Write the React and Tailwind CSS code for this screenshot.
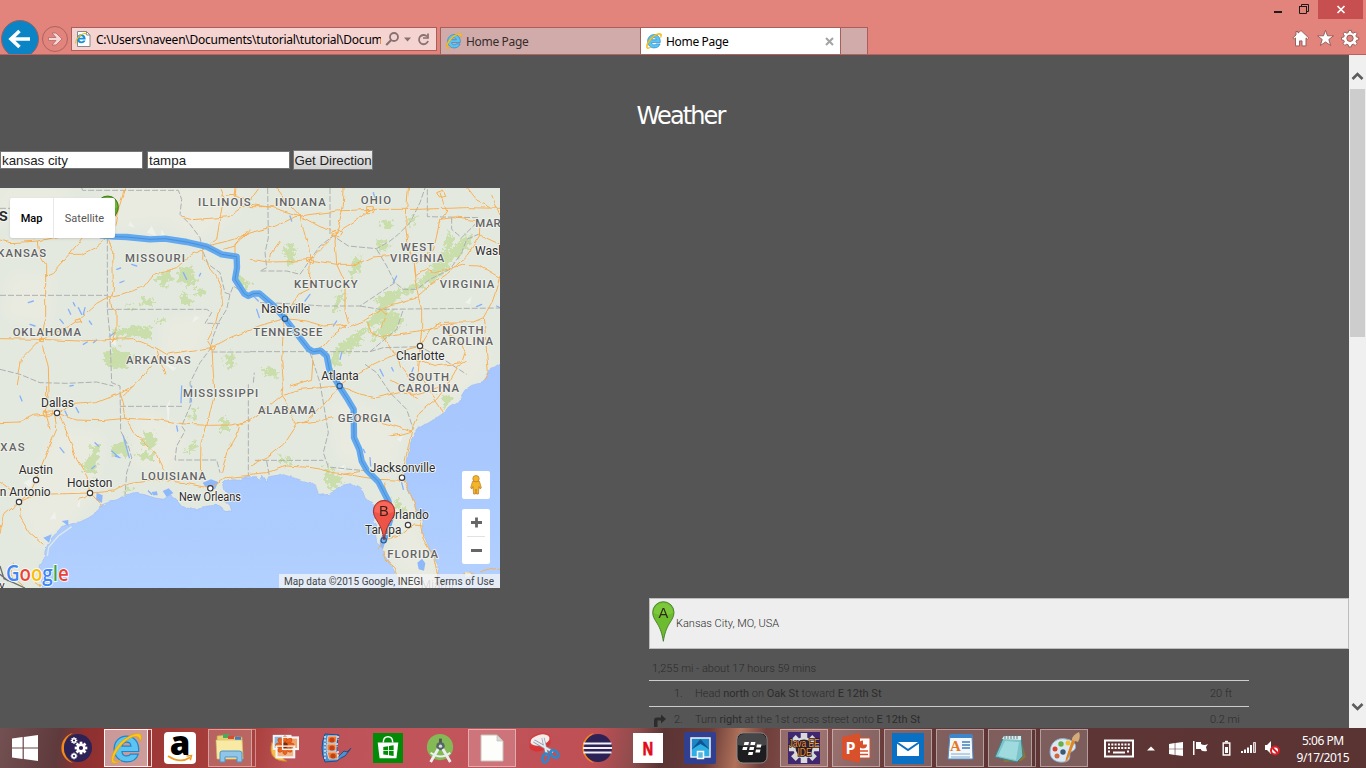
import React from "react";

/* ---------- shared icons ---------- */

function IELogo({ size = 16 }) {
  return (
    <svg width={size} height={size} viewBox="2 1 29 30" className="shrink-0">
      <path d="M16.500 4C9.600 4 4.500 9.500 4.500 16.500S9.800 29 16.700 29c5.600 0 9.700-2.900 11.200-7.600h-7.400c-.8 1.200-2 1.800-3.800 1.800-2.700 0-4.400-1.600-4.600-4.300H28.300C29 10 24 4 16.500 4zm-4.300 9.600c.6-2.400 2-3.700 4.400-3.700s3.900 1.300 4.200 3.700z" fill="#5cc3f2" stroke="#1f86c8" strokeWidth="1.200" />
      <path d="M3.500 30C-.5 27.500 4 16 12 9 19.500 2.500 28.500-.5 30.500 3c1 1.800.2 4.500-1.500 7 .3-2.300.2-4-1-5C24.500 2.500 16.500 7 11 13.500 5.500 20 2.800 27 4.800 28.300c1.300.9 3.700 0 6.200-1.500C8 29.800 5 31 3.500 30z" fill="#fbc91c" stroke="#e0a30c" strokeWidth=".7" />
    </svg>
  );
}

function WindowsLogo({ size = 26 }) {
  return (
    <svg width={size} height={size} viewBox="0 0 26 26" fill="#fff">
      <path d="M0 3.600 10.600 2v10.400H0zM11.800 1.900 26 0v12.400H11.800zM0 13.600h10.600V24L0 22.500zM11.800 13.600H26V26l-14.200-2z" />
    </svg>
  );
}

/* ---------- browser chrome ---------- */

function WindowButtons() {
  return (
    <div className="flex h-[19px] items-start">
      <svg width="60" height="19" viewBox="0 0 60 19" fill="none" stroke="#1e1a1a">
        <path d="M10 12h8" strokeWidth="2" />
        <path d="M35.500 6.500h7v7h-7z" strokeWidth="1" />
        <path d="M35 6.500h8M37.500 6V4.500h7v7H43" strokeWidth="1" />
      </svg>
      <svg width="45" height="19" viewBox="0 0 45 19" className="ml-[-6px] bg-[#c84f50]">
        <path d="m19.500 6 7 7m0-7-7 7" stroke="#fff" strokeWidth="1.700" />
      </svg>
    </div>
  );
}

function AddressBar() {
  return (
    <div className="mt-[27px] flex h-[24px] w-[366px] items-center border border-[#a65f5b] bg-[#f5d3d1] pl-[3px]">
      <svg width="16" height="18" viewBox="0 0 16 18" className="shrink-0">
        <path d="M2.500 1.500h9l3.500 3.500v11.500h-12.500z" fill="#fff" stroke="#888" />
        <path d="M11.500 1.500v3.500H15" fill="none" stroke="#888" />
        <g transform="translate(0 2.500) scale(.38)">
          <path d="M16.500 4.500C9.600 4.500 5 9.700 5 16.500s4.800 12 11.700 12c5.400 0 9.300-2.700 10.900-7.300h-6.500c-.9 1.500-2.400 2.200-4.300 2.200-3 0-4.900-1.800-5.100-4.900H28c.6-8.300-4-14-11.500-14zm-4.700 9.300c.6-2.700 2.300-4.200 4.800-4.200s4.200 1.500 4.600 4.200z" fill="#1b91d6" />
          <path d="M3 29C-1 24 8 11 16 6c6-4 13-5 14-1" fill="none" stroke="#f0bd1b" strokeWidth="3" />
        </g>
      </svg>
      <div className="ml-[5px] w-[285px] overflow-hidden whitespace-nowrap pt-[2px] font-['Noto_Sans',sans-serif] text-[12px] leading-[20px] tracking-[-0.24px] text-black">
        C:\Users\naveen\Documents\tutorial\tutorial\Documents
      </div>
      <svg width="50" height="20" viewBox="0 0 50 20" className="ml-[4px] shrink-0" fill="none" stroke="#867271">
        <circle cx="9" cy="8" r="4" strokeWidth="1.800" />
        <path d="m6.200 11-5 5" strokeWidth="2.200" />
        <path d="M19 8.500h7l-3.500 4z" fill="#867271" stroke="none" />
        <path d="M42 7.500A4.600 4.600 0 1 0 43 12" strokeWidth="1.800" />
        <path d="M43 4.500v4.500h-5" strokeWidth="1.700" />
      </svg>
    </div>
  );
}

function Tab({ active }) {
  return (
    <div className={"flex h-[27px] items-center border-r border-t border-[#a65f5b] pl-[5px] font-['Noto_Sans',sans-serif] text-[12px] tracking-[-0.33px] " + (active ? "w-[200px] bg-white text-black" : "w-[201px] border-l bg-[#d1abaa] text-[#352b2b]")}>
      <IELogo size={16} />
      <span className="ml-[4px] flex-1 pt-[2px]">Home Page</span>
      {active && (
        <svg width="9" height="9" viewBox="0 0 9 9" className="mr-[6px]" stroke="#a3a3a3" strokeWidth="2">
          <path d="m1 1 7 7m0-7-7 7" />
        </svg>
      )}
    </div>
  );
}

function BrowserHeader() {
  return (
    <header className="flex h-[55px] w-full items-start border-b border-[#b9615b] bg-[#e2837c]">
      <svg width="71" height="54" viewBox="0 0 71 54" className="shrink-0">
        <circle cx="20" cy="39" r="18.500" fill="#0b84c6" stroke="#96605f" />
        <path d="M30 39H12m7.500-8L11 39l8.500 8" fill="none" stroke="#fff" strokeWidth="3.600" />
        <circle cx="55" cy="39" r="12.500" fill="none" stroke="#ab6461" />
        <path d="M48.500 37.500h7.500l-4-4.500h4l6 6-6 6h-4l4-4.500h-7.500z" fill="#f6d6d4" stroke="#b16a67" strokeWidth=".8" />
      </svg>
      <AddressBar />
      <div className="ml-[3px] mt-[27px] flex">
        <Tab />
        <Tab active />
        <div className="h-[27px] w-[27px] border-r border-t border-[#a65f5b] bg-[#d1abaa]" />
      </div>
      <div className="ml-auto flex flex-col items-end">
        <div className="pr-[3px]"><WindowButtons /></div>
        <svg width="74" height="34" viewBox="1292 19 74 34" className="mt-0" fill="#fff" stroke="#8f5754" strokeWidth=".9">
          <path d="m1301 30.500 7.800 7.500-1.200 1.200-1.600-1.300v8h-4v-5h-2.500v5h-4v-8l-1.500 1.300-1.200-1.200 3.200-3v-3.500h2v1.600z" />
          <path d="m1325.500 30.300 2 5.500h6l-4.700 3.700 1.900 6-5.200-3.500-5.200 3.500 1.900-6-4.700-3.700h6z" />
          <g transform="translate(1350 38)">
            <path d="M-1.300-7.600h2.600l.5 2.200 1.500.6L5.300-6l1.800 1.800-1.200 2 .6 1.300 2.200.4v2.300l-2.200.5-.6 1.400 1.200 1.900-1.800 1.800-2-1.200-1.500.6-.5 2.100h-2.600l-.5-2.100-1.400-.6-2 1.200-1.700-1.800 1.200-1.900-.6-1.400-2.200-.5V-.5l2.200-.4.600-1.400-1.200-1.900 1.700-1.800 2 1.200 1.400-.6z" />
            <circle r="3.200" cy=".3" fill="#e2837c" />
          </g>
        </svg>
      </div>
    </header>
  );
}

/* ---------- map ---------- */

const WATER =
  "M125 1210 125 1180 120 1140 133 1120 135 1095 146 1070 160 1050 180 1032 190 1020 215 1010 240 1008 265 996 290 980 300 960 325 950 350 940 372 930 400 920 440 928 465 936 490 940 512 926 528 938 545 958 562 966 585 972 605 966 620 958 645 955 660 960 678 976 695 974 690 958 675 945 688 935 700 936 690 922 672 912 668 895 680 883 700 878 720 880 735 872 770 872 780 882 788 868 800 885 806 872 830 868 850 866 870 872 890 878 910 884 932 890 947 900 950 915 960 928 985 925 1005 915 1025 898 1052 893 1075 905 1088 916 1095 935 1110 950 1127 960 1130 990 1120 1005 1133 1020 1127 1050 1130 1070 1145 1085 1150 1105 1165 1125 1180 1150 1195 1180 1205 1210 1320 1210 1312 1175 1317 1150 1305 1120 1290 1090 1265 1035 1270 1005 1253 985 1240 945 1222 905 1215 880 1218 840 1226 800 1232 770 1240 750 1260 724 1290 706 1315 695 1335 680 1345 666 1370 650 1384 630 1395 612 1415 598 1445 590 1458 570 1465 555 1485 545 1500 535 1520 520 1520 1210Z";

const ROADS = [
  "0 162 30 170 70 168 115 165 160 155 215 140 323 155",
  "115 165 120 205 137 235 137 400 123 460 64 520 52 600",
  "323 155 285 185 245 205 210 205",
  "250 155 210 205 160 260 135 270",
  "323 155 338 190 340 310 335 330 375 322 430 303 460 265 530 245 575 205 610 190",
  "335 330 290 355 240 400 190 430 120 460",
  "0 458 120 460 240 465 340 460 400 458 470 487 500 505 560 495 635 485 690 455 750 430",
  "330 330 335 365 348 375 348 440 337 468",
  "120 460 145 540 147 620 136 680",
  "335 470 345 455 M470 487 485 540 498 565 M455 540 425 575 370 630",
  "610 190 608 220 650 270 667 310 665 350 650 410 620 465 636 490 640 560 645 620 620 720 603 770 601 865",
  "610 190 650 160 662 85 672 35 660 6 M620 182 700 160 750 140 830 120 900 85",
  "545 93 575 101 630 97 690 92 740 55 775 6",
  "375 6 360 55 350 90 345 120 335 155",
  "705 6 702 30 720 50 750 62 830 62 M663 30 700 25 740 40",
  "670 190 705 180 750 130 M705 215 705 175 740 135",
  "750 55 820 65 900 90 1010 75 1110 70 1250 70 1400 65 1500 67",
  "830 6 860 45 900 90 960 122 1010 140 1080 95 1110 70",
  "900 88 910 130 925 180 931 222 927 310 895 325 870 370 855 398",
  "1032 6 1030 60 1010 140 1005 165 1010 235 1035 290 1035 375 1045 410",
  "1010 140 970 180 930 220 865 227 805 228 750 220 M810 225 815 200 840 165",
  "930 222 1010 235 1070 235 1115 213 1180 208",
  "1320 20 1330 50 1340 75 1317 110 1310 150 1300 190 1240 235 1245 280 1255 330",
  "1217 120 1225 180 1239 225 1245 270 M1217 120 1220 70 1225 6",
  "1320 100 1360 95 1435 105 M1440 110 1438 150 1400 210 1340 265 1290 298 1250 333 1180 355 1140 375 1090 405 1040 425 1025 412",
  "1245 265 1280 250 1300 258 1340 250 1385 238 1440 240 1500 275",
  "1500 270 1485 320 1475 350 1450 395 1455 430 1460 500 1465 560 1450 585",
  "1400 6 1430 45 1470 65 M1475 30 1500 90 M1435 145 1500 175",
  "1255 330 1265 370 1265 430 1260 480 1270 490",
  "1260 480 1290 430 1320 410 1360 408 1420 408 1450 395",
  "1310 410 1345 440 1385 475 1395 500 1385 530 1310 540 1250 520",
  "1100 405 1110 440 1140 452 1220 440 1290 430 1360 410",
  "1140 365 1160 385 1145 425 M1145 450 1175 490 1205 545 1240 590",
  "1260 480 1210 495 1160 515 1110 540 1060 570 1019 600",
  "1260 490 1255 560 1280 600 1320 660 1330 680",
  "750 430 790 415 855 398 920 405 970 420 1040 415 1000 445 970 480 940 498 935 580 870 600",
  "855 398 850 430 845 520 850 595 845 630 890 715 850 775 800 815 750 840",
  "890 715 920 705 950 680 1019 600 M890 712 960 705 1000 695",
  "1019 600 1080 625 1130 635 1195 620 1245 625 1330 600",
  "1019 600 960 605 900 610 850 625 800 665 750 703",
  "1065 690 1110 700 1170 715 1235 735 M1170 580 1205 600 1225 620 1250 635",
  "1235 735 1260 680 1310 640 1340 600 1375 540 1400 525",
  "1235 735 1225 780 1210 850 1206 875 1235 930 1260 1010 1270 1060 1300 1110 1315 1180",
  "0 710 60 708 100 688 170 681 230 702 300 704 380 697 480 702 560 715 625 718 690 717 750 705",
  "171 681 220 655 290 650 340 630 365 620 400 600",
  "360 620 370 650 378 700 400 740 450 785 470 805 495 855",
  "165 690 170 730 140 800 108 882 90 920 57 948 15 985 0 1040",
  "180 690 205 750 230 820 260 870 270 921 310 960",
  "57 948 60 990 90 1040 130 1075 M57 948 110 925 200 923 270 921 340 915 385 890 460 880 550 890 631 907 680 875 750 868",
  "0 888 57 930 M270 921 255 935 235 940",
  "720 715 710 750 680 800 665 860 M750 703 710 720",
  "750 865 800 860 860 840 940 845 1000 860 1070 870 1130 880 1206 883",
  "1150 890 1170 950 1165 990 1155 1030 1150 1063 1130 1090 M1155 1060 1200 1050 1240 1017 1270 1020",
  "1145 1085 1155 1120 1185 1145 1200 1185 1210 1206 M1095 855 1060 860 1030 865 M140 600 140 690 150 730",
  "1165 750 1200 745 1235 735 M40 1130 35 1170 70 1200 M105 1190 120 1200",
];

const BORDERS = [
  "0 328 322 328 M322 155 322 370 620 370 635 380 615 412 660 412",
  "0 67 30 67 M245 6 248 13 535 13 545 40 540 85 570 115 600 155 610 200 625 235 660 260 675 320 690 325 700 300 745 330",
  "322 370 330 450 335 590 360 600 362 735 385 780 395 815 380 860 375 930",
  "690 325 680 370 655 410 640 450 630 490 600 530 570 590 575 650 545 720 555 735 530 780 525 822 650 822 660 860",
  "635 498 750 498 M745 595 745 870 M360 661 548 661",
  "0 550 60 565 120 590 200 592 290 588 340 600",
  "803 6 805 155 795 200 800 245 780 255 860 255 900 265 930 222 960 180 1000 150 1045 180 1130 188 1170 165 1195 145 1230 110 1260 50 1275 6",
  "990 6 990 150 M1282 10 1282 92 1435 95 M1355 95 1355 130 1385 155 1425 115",
  "1130 190 1160 240 1185 290 1210 310 1250 310 1290 280 1350 250 1385 200 1400 160 1435 145",
  "780 350 850 352 970 360 1080 360 1185 290 M1080 360 1140 370 1500 366",
  "750 497 1110 497 1150 485 1260 482 1330 520 1400 565 M1110 497 1190 430 1210 370",
  "760 590 763 560 M930 500 960 590 985 740 970 800 985 843 1050 850 1160 860 1210 855",
  "765 823 970 823 M800 825 808 870 M1095 535 1130 560 1170 620 1220 670 1240 730",
];

const FORESTS = [
  "475 265 510 260 515 285 490 300 470 285", "540 245 580 240 575 270 600 275 570 300 535 290", "540 325 575 330 580 355 545 355", "590 305 615 310 610 335 585 330",
  "378 358 405 360 400 375 375 372", "425 335 460 345 455 360 425 358", "470 395 495 400 490 415 475 412",
  "340 430 400 420 455 425 450 460 400 450 340 455", "345 485 390 495 405 525 370 550 320 540 310 500",
  "700 265 750 290 745 310 715 300", "675 505 705 500 700 545 672 540",
  "270 780 300 785 295 820 275 815", "430 735 470 745 465 785 425 780", "415 805 465 800 465 825 420 820", "555 790 590 765 590 790 555 805",
  "330 790 380 755 385 810 340 810", "245 845 265 810 290 815 290 870 255 860", "660 700 690 705 690 735 660 738",
  "575 665 590 670 585 710 575 700", "370 905 400 905 395 915 375 915",
  "1145 115 1160 100 1180 110 1175 128 1150 128", "1225 95 1250 88 1250 115 1220 118", "860 170 885 180 878 250 855 205", "1130 170 1165 168 1165 190 1130 192",
  "1335 170 1345 130 1360 160 1350 200 1395 150 1425 140 1415 175 1350 235 1300 290 1210 325 1160 375 1200 380 1210 410 1170 450 1115 460 1150 405 1100 430 1070 480 1020 510 1010 540 985 530 1000 495 1040 460 1100 420 1140 350 1180 320 1250 290 1290 250 1320 220",
  "1120 345 1160 320 1200 325 1150 350", "1055 220 1085 210 1080 250 1045 290 1050 260", "1020 315 1040 320 1010 375 995 375", "785 545 830 550 830 575 790 565",
  "975 835 1025 880 1000 920 975 890", "840 810 875 815 865 840 840 835", "1320 625 1360 635 1335 665", "1180 930 1200 950 1220 970 1200 980 1190 960", "1210 975 1235 985 1220 1000", "120 1190 140 1190 138 1206 120 1206",
];

const LAKES = [
  "205 370 212 385", "235 365 245 385", "250 385 255 365", "180 400 190 412", "220 350 225 360", "250 475 262 468", "280 470 290 462", "268 405 275 415", "85 350 100 345", "90 415 105 420",
  "370 750 388 815", "335 795 355 812", "345 810 360 815", "545 600 543 650", "530 720 533 735", "285 840 275 848", "410 240 395 235", "350 250 362 246", "150 65 155 85",
  "560 280 550 260", "598 270 602 262", "360 290 372 285", "330 450 345 440", "180 785 192 800", "285 770 295 780", "195 675 202 690", "228 665 236 680", "445 915 455 925",
  "1110 815 1112 840", "1205 890 1210 910", "1025 500 1020 520", "1430 362 1445 355", "915 345 930 325", "760 330 775 345", "770 370 778 395", "1000 420 1010 405", "1090 790 1095 800",
  "1490 360 1500 365", "870 90 875 105", "1120 20 1125 35", "1190 270 1180 290", "1140 550 1150 570", "1240 545 1235 560", "1180 555 1175 545", "60 630 66 645", "210 600 220 598", "575 600 570 650",
];

const STATES = [
  ["ILLINOIS", 594, 749, 60], ["INDIANA", 825, 974, 60], ["OHIO", 1082, 1170, 54], ["KANSAS", -8, 135, 213], ["MISSOURI", 375, 552, 228],
  ["OKLAHOMA", 38, 240, 449], ["ARKANSAS", 378, 569, 533], ["WEST", 1202, 1299, 195], ["VIRGINIA", 1170, 1330, 228], ["MAR", 1426, 1499, 123],
  ["KENTUCKY", 882, 1070, 306], ["VIRGINIA", 1319, 1480, 306], ["TENNESSEE", 760, 964, 449], ["NORTH", 1327, 1448, 444], ["CAROLINA", 1296, 1476, 477],
  ["SOUTH", 1225, 1344, 585], ["CAROLINA", 1193, 1374, 618], ["MISSISSIPPI", 549, 772, 633], ["XAS", 1, 71, 794], ["LOUISIANA", 424, 615, 882],
  ["ALABAMA", 774, 944, 684], ["GEORGIA", 1013, 1169, 707], ["FLORIDA", 1162, 1311, 1115],
];

const CITIES = [
  ["Nashville", 784, 930, 381], ["Atlanta", 964, 1076, 583], ["Charlotte", 1188, 1334, 522], ["Dallas", 123, 222, 664], ["Austin", 56, 159, 863],
  ["n Antonio", -1, 152, 929], ["Houston", 201, 337, 903], ["New Orleans", 537, 723, 944], ["Jacksonville", 1109, 1306, 858],
  ["Orlando", 1160, 1287, 999], ["Tampa", 1095, 1204, 1044],
];

const DOTS = [[855, 398], [1019, 600], [1260, 480], [171, 681], [108, 882], [57, 948], [270, 921], [631, 907], [1206, 875], [1224, 1017], [1151, 1063]];

const ROUTE =
  "M300 148 345 152 380 153 450 160 495 158 560 168 620 182 665 205 710 212 711 245 705 280 733 323 745 330 760 323 778 322 820 358 855 398 925 488 940 497 962 494 980 510 988 550 1019 603 1040 635 1061 670 1062 755 1078 790 1085 825 1100 852 1135 887 1165 945 1175 985 1160 1035 1152 1062";

function Pin({ x, y, letter, fill, light, edge }) {
  return (
    <g transform={`translate(${x} ${y})`}>
      <path d="M0 0C-4-24-9-38-18-53-27-67-32-75-32-87A32 32 0 0 1 32-87C32-75 27-67 18-53 9-38 4-24 0 0z" fill={fill} stroke={edge} strokeWidth="2.500" />
      <path d="M-29-86A29 29 0 0 1 29-86C20-77-20-77-29-86z" fill={light} opacity=".5" />
      <text x="0" y="-71" textAnchor="middle" fontSize="44" fontFamily="Liberation Sans, sans-serif" fill="#26180f" opacity=".9">{letter}</text>
    </g>
  );
}

function MapArt() {
  return (
    <svg width="500" height="400" viewBox="0 6 1500 1200" className="block" fontFamily="Roboto, sans-serif">
      <defs>
        <linearGradient id="sea" x1="0" y1="0" x2="0" y2="1">
          <stop offset="0" stopColor="#a7c6fd" />
          <stop offset=".45" stopColor="#a9c8fe" />
          <stop offset="1" stopColor="#b2d1ff" />
        </linearGradient>
        <filter id="soft"><feGaussianBlur stdDeviation="18" /></filter>
        <filter id="ragged" x="-2%" y="-2%" width="104%" height="104%">
          <feTurbulence type="fractalNoise" baseFrequency=".07" numOctaves="3" seed="4" result="n" />
          <feDisplacementMap in="SourceGraphic" in2="n" scale="42" xChannelSelector="R" yChannelSelector="G" />
        </filter>
        <filter id="wavy" filterUnits="userSpaceOnUse" x="-20" y="-20" width="1540" height="1250">
          <feTurbulence type="fractalNoise" baseFrequency=".03" numOctaves="2" seed="9" result="n" />
          <feDisplacementMap in="SourceGraphic" in2="n" scale="14" xChannelSelector="R" yChannelSelector="G" />
        </filter>
      </defs>
      <rect y="6" width="1500" height="1200" fill="#e4e9df" />
      <g fill="#eaebe0" filter="url(#soft)">
        <path d="M340 6h400l-60 90-90 60-100-60-160 20zM40 270l110 10-10 130-120-20zM500 410l130-20-50 120-90 20z" />
        <path d="M180 730l120 20-20 160-90 120-80 40-40-110zM420 680l130 60-40 120-100-30zM1000 640l200 80-30 140-150-50z" />
        <path d="M1240 480l200-40 20 100-120 120-100-40zM1200 940l80 160 20 90-110-60zM0 6h200v100H0z" />
      </g>
      <g fill="#c9deaa" filter="url(#ragged)">
        {FORESTS.map((p, i) => <polygon key={i} points={p} />)}
      </g>
      <g fill="#f1f2ee" opacity=".85">
        <path d="M455 120l15 30-30-10zM485 130l25 40-30-15zM500 660l10-20-5 90zM230 960l12-25-3 30zM150 1000l15-25 3 25zM575 410l10-20 15 5zM925 445l35-25-20 35zM1395 350l20-20-5 25zM490 530l40 15-10 10zM390 105l15 20-20-5zM330 470l15-20 4 30zM1010 850l25-15-5 20zM1190 760l20-12-8 20zM70 890l35-20-15 35z" />
      </g>
      <path d={WATER} fill="url(#sea)" stroke="#9dbcf5" strokeWidth="2" filter="url(#wavy)" />
      <path d="M142 1110 146 1084 175 1050 215 1022" fill="none" stroke="#dfe8e3" strokeWidth="4" />
      <g fill="#8fb8fb">
        <path d="M608 890l25-10 22 8-10 22-28-6zM488 915l18-8 14 14-20 12zM1252 1130l14-12 10 14-4 22-16-4zM1140 1060l15 10-6 20-10-10zM290 920l18 8-2 22-18-8zM455 918l16-2 2 12-14 0zM1262 965l12 8 10 25-12 5zM130 1055l25-10-8 25zM185 1005l20-3 0 18z" />
        {LAKES.map((p, i) => <path key={i} d={"M" + p} stroke="#86b2fb" strokeWidth="4" fill="none" strokeLinecap="round" />)}
      </g>
      <g fill="none" stroke="#adb0b1" strokeWidth="3" strokeDasharray="18 6">
        {BORDERS.map((p, i) => <path key={i} d={"M" + p} />)}
      </g>
      <path d="M0 1140 12 1178 40 1190 75 1206M0 1165 25 1185" fill="none" stroke="#6d7073" strokeWidth="4" />
      <g fill="none" stroke="#f8b054" strokeWidth="3" strokeLinejoin="round" filter="url(#wavy)">
        {ROADS.map((p, i) => <path key={i} d={"M" + p} />)}
        <path d="M1100 62h20v18h-20zM998 138l12-10 18 10-8 14h-20zM225 402l18-4 2 12-18 2zM118 455l12 0 0 12-12 0zM630 480l16 0-4 12-12-2zM1310 20l20-8 8 18-20 6zM920 215h20v14h-20zM130 675h25v14h-25z" />
        <path d="M1390 1165l20-7 18 5M1440 1158l50-10 10 3M1465 1195l30 8" />
      </g>
      <path d="M1395 1158l16 2 4 10-18 2z" fill="#e3ead8" />
      <g fill="none" strokeLinejoin="round">
        <path d={ROUTE} stroke="#5ba5f0" strokeWidth="19" opacity=".95" />
        <path d={ROUTE} stroke="#4c8fd4" strokeWidth="3" />
      </g>
      {DOTS.map(([cx, cy], i) => (
        <circle key={i} cx={cx} cy={cy} r="8" fill={i < 2 || i === 10 ? "#70aff0" : "#fff"} stroke={i < 2 || i === 10 ? "#28598f" : "#3b3b3b"} strokeWidth="3.500" />
      ))}
      <g fontSize="34" fontWeight="500" fill="#626365" stroke="#f2f4ee" strokeWidth="5" strokeLinejoin="round" paintOrder="stroke">
        {STATES.map(([t, a, b, y], i) => <text key={i} x={a} y={y} textLength={b - a + 3} lengthAdjust="spacing">{t}</text>)}
      </g>
      <g fontSize="36" fill="#2c2c2c" stroke="#f5f6f2" strokeWidth="5" strokeLinejoin="round" paintOrder="stroke">
        {CITIES.map(([t, a, b, y], i) => <text key={i} x={a} y={y} textLength={b - a} lengthAdjust="spacingAndGlyphs">{t}</text>)}
        <text x="1425" y="207">Washington</text>
        <text x="-4" y="106" fontSize="54" fontWeight="500">s</text>
        <text x="-2" y="1208" fontSize="34">v</text>
        <text x="1262" y="1208" opacity=".5">Miami</text>
      </g>
      <Pin x={323} y={149} letter="A" fill="#60ad2b" light="#86d13f" edge="#35691a" />
      <Pin x={1152} y={1062} letter="B" fill="#ee5348" light="#ff7b6b" edge="#8f2520" />
      <text x="18" y="1184" fontSize="62" fontFamily="Open Sans, sans-serif" fontWeight="600" textLength="188" lengthAdjust="spacingAndGlyphs" stroke="#fff" strokeWidth="5" paintOrder="stroke">
        <tspan fill="#4285f4">G</tspan><tspan fill="#ea4335">o</tspan><tspan fill="#fbbc05">o</tspan><tspan fill="#4285f4">g</tspan><tspan fill="#34a853">l</tspan><tspan fill="#ea4335">e</tspan>
      </text>
    </svg>
  );
}

function MapPanel() {
  return (
    <div className="relative h-[400px] w-[500px] overflow-hidden font-[Roboto,sans-serif]">
      <MapArt />
      <div className="absolute left-[10px] top-[10px] flex h-[40px] w-[105px] items-center rounded-[2px] bg-white text-[11px] shadow-sm">
        <span className="flex h-full w-[44px] items-center justify-center border-r border-[#e8e8e8] pt-[2px] font-medium text-black">Map</span>
        <span className="flex-1 pt-[2px] text-center text-[#565656]">Satellite</span>
      </div>
      <div className="absolute left-[462px] top-[283px] flex h-[28px] w-[28px] items-center justify-center rounded-[2px] bg-white">
        <svg width="12" height="20" viewBox="0 0 12 20" fill="#f5b52a" stroke="#b9791c" strokeWidth=".7">
          <path d="M2.500 6.500h7l1.800 6.500-1.300.8-1-2.300-.6 7.500H6.500L6 14l-.5 5H3.600L3 11.500l-1 2.300-1.300-.8z" />
          <circle cx="6" cy="3.700" r="3.200" />
        </svg>
      </div>
      <div className="absolute left-[462px] top-[321px] flex h-[55px] w-[28px] flex-col items-center rounded-[2px] bg-white">
        <svg width="28" height="55" viewBox="0 0 28 55" stroke="#666">
          <path d="M14.500 8.500v10M9 13.500h11M9 41.500h11" strokeWidth="2.800" />
          <path d="M5 27.500h18" stroke="#e2e2e2" />
        </svg>
      </div>
      <div className="absolute bottom-0 right-0 flex h-[14px] w-[221px] items-center justify-between whitespace-nowrap bg-[#f5f5f5]/75 pl-[5px] pr-[6px] text-[10px] text-[#444]">
        <span className="tracking-[0.02px]">Map data ©2015 Google, INEGI</span>
        <span className="tracking-[0.04px]">Terms of Use</span>
      </div>
    </div>
  );
}

/* ---------- directions ---------- */

function Step({ n, icon, children, distance }) {
  return (
    <div className="flex h-[26px] w-[600px] items-center border-t border-[#cdcdcd] pt-[2px] text-[11px]">
      <span className="flex w-[25px] pl-[4px]">{icon}</span>
      <span className="w-[21px]">{n}.</span>
      <span className="flex-1 whitespace-nowrap">{children}</span>
      <span className="w-[39px]">{distance}</span>
    </div>
  );
}

function Directions() {
  return (
    <div className="ml-[649px] mt-[10px] font-[Roboto,sans-serif] text-[11px] font-light text-[#2c2c2c]">
      <div className="flex h-[51px] items-center border border-[#bdbdbd] bg-[#eeeeee] pl-[2px]">
        <svg width="23" height="42" viewBox="-34 -121 69 126" className="mb-[3px]">
          <Pin x={0} y={0} letter="A" fill="#6dbb2f" light="#8ad648" edge="#3f7520" />
        </svg>
        <span className="ml-[1px] pt-[2px]">Kansas City, MO, USA</span>
      </div>
      <div className="flex h-[31px] items-end pb-[3px] pl-[3px]">1,255 mi - about 17 hours 59 mins</div>
      <Step n={1} distance="20 ft">
        Head <b className="font-normal">north</b> on <b className="font-normal">Oak St</b> toward <b className="font-normal">E 12th St</b>
      </Step>
      <Step
        n={2}
        distance="0.2 mi"
        icon={
          <svg width="14" height="14" viewBox="0 0 14 14">
            <path d="M1 13V6.500Q1 3.500 4 3.500h4V0.500l5 4.500-5 4.500V6.500H4.500V13z" fill="#2c2c2c" />
          </svg>
        }
      >
        Turn <b className="font-normal">right</b> at the 1st cross street onto <b className="font-normal">E 12th St</b>
      </Step>
    </div>
  );
}

/* ---------- taskbar ---------- */

function Slot({ open, active, stacked, children }) {
  return (
    <div className="flex h-[40px] w-[52px] shrink-0 items-center">
      <div
        className={
          "flex h-[38px] items-center justify-center " +
          (open ? "border " : "") +
          (active ? "border-white/90 bg-white/50 " : open ? "border-white/40 bg-white/20 " : "") +
          (stacked ? "w-[44px]" : "w-[48px]")
        }
      >
        {children}
      </div>
      {stacked && <div className={"h-[38px] w-[4px] border border-l-0 " + (active ? "border-white/80" : "border-white/40")} />}
    </div>
  );
}

function Ico({ children, w = 32 }) {
  return <svg width={w} height={w} viewBox="0 0 32 32" className="shrink-0">{children}</svg>;
}

const GEAR_TEETH = [0, 45, 90, 135, 180, 225, 270, 315];

function Gear({ x, y, s, fill, hole }) {
  return (
    <g transform={`translate(${x} ${y}) scale(${s})`} fill={fill}>
      {GEAR_TEETH.map((a) => <rect key={a} x="-1.300" y="-6" width="2.600" height="4" transform={`rotate(${a})`} />)}
      <circle r="4.300" />
      <circle r="2" fill={hole} />
    </g>
  );
}

function Taskbar() {
  return (
    <footer className="flex h-[40px] w-full items-center overflow-hidden bg-[linear-gradient(100deg,#735052_0px,#5e3a3c_60px,#8e3030_85px,#a33b38_180px,#a9403c_250px,#bb5358_290px,#c2545b_440px,#bd4f55_590px,#8c4c4c_630px,#5a3434_655px,#6a3b38_700px,#b0725a_730px,#6e3f3c_755px,#8a5350_800px,#6c3f3d_860px,#5f3635_940px,#5a3333_1366px)]">
      <Slot><div className="pl-[2px]"><WindowsLogo /></div></Slot>
      <Slot>
        <Ico>
          <path d="M13 1A15.500 15.500 0 0 0 13 31 17 17 0 0 1 13 1z" fill="#f18a1e" />
          <circle cx="18" cy="16" r="14" fill="#2c2255" />
          <Gear x={21} y={16} s={1.050} fill="#fff" hole="#2c2255" />
          <Gear x={14} y={8.500} s={0.550} fill="#fff" hole="#2c2255" />
          <Gear x={14} y={24} s={0.550} fill="#fff" hole="#2c2255" />
        </Ico>
      </Slot>
      <Slot open active stacked><IELogo size={31} /></Slot>
      <Slot>
        <Ico>
          <rect width="32" height="32" rx="4" fill="#fff" />
          <text x="16" y="22.500" textAnchor="middle" fontFamily="Open Sans, sans-serif" fontWeight="800" fontSize="33">a</text>
          <path d="M4 24q12 8 22 1.500" fill="none" stroke="#f39a1e" strokeWidth="1.800" />
          <path d="m22.500 24 5-.5-1.200 4.700" fill="none" stroke="#f39a1e" strokeWidth="1.500" />
        </Ico>
      </Slot>
      <Slot open stacked>
        <Ico>
          <path d="M3 4l8-1 1 2h16l1 22H4z" fill="#e8cf72" stroke="#c7a745" strokeWidth=".6" />
          <path d="M9 2h6v4H9z" fill="#4aa95a" /><path d="M14 4h6v3h-6z" fill="#d94b36" /><path d="M21 5h6v3h-6z" fill="#3b7ed0" />
          <path d="M2 8h26l1 19H3z" fill="#f8e9a5" stroke="#d3b95f" strokeWidth=".6" />
          <path d="M6 30v-9q0-2 2-2h17q3 0 3 2v9h-5v-5H11v5z" fill="#8ec5e8" stroke="#4e93c7" />
        </Ico>
      </Slot>
      <Slot>
        <Ico w={30}>
          <path d="M3 10q-5 20 16 20-8-4-9-14z" fill="#f2bd4b" stroke="#d5892a" />
          <rect x="5" y="3" width="18" height="14" fill="#8fb8dc" stroke="#f5f5f5" strokeWidth="2" />
          <rect x="15" y="5" width="16" height="12" fill="#f3a46a" stroke="#f5f5f5" strokeWidth="2" />
          <rect x="8" y="14" width="19" height="12" fill="#f0b488" stroke="#f5f5f5" strokeWidth="2" />
          {GEAR_TEETH.map((a) => <ellipse key={a} cx="17" cy="8" rx="2.500" ry="5" fill="#e9641d" stroke="#b93b0c" strokeWidth=".5" transform={`rotate(${a} 17 13)`} />)}
          <circle cx="17" cy="13" r="3" fill="#7a2b0c" />
          <rect x="14.500" y="4.500" width="17" height="13" fill="none" stroke="#f5f5f5" strokeWidth="1.500" />
          <rect x="8" y="14" width="19" height="12" fill="none" stroke="#f5f5f5" strokeWidth="1.500" />
        </Ico>
      </Slot>
      <Slot>
        <Ico>
          <path d="M5 2q-6 14 0 28l12-1q3-3 8-5l4-5 2-3-4 4-3-1q-4 4-6 6-3-10 1-22z" fill="#4d91cf" stroke="#204f86" />
          <path d="M8 4h9l-1 7H7zM7 12h9v7H7zM7 20h10l1 7H9z" fill="#ef7e36" stroke="#dfe9f3" strokeWidth=".8" />
          <circle cx="12" cy="8" r="2.600" fill="#c43f12" /><circle cx="12" cy="16" r="2.600" fill="#c43f12" /><circle cx="13" cy="24" r="2.600" fill="#c43f12" />
          <path d="M5 4v24M18 4v4m-1 3v4m1 4v6" stroke="#dcecf8" strokeWidth="1.500" strokeDasharray="2 1.500" />
        </Ico>
      </Slot>
      <Slot>
        <Ico w={30}>
          <rect width="32" height="32" fill="#038a07" />
          <path d="M5 10h22l-2 17H7z" fill="#fff" /><path d="M11 10q0-6 5-6t5 6" fill="none" stroke="#fff" strokeWidth="1.500" />
          <path d="m11 15 5-1v4h-5zm6-1.200 5-.8v5h-5zM11 19h5v4.500l-5-.7zm6 0h5v5.400l-5-.8z" fill="#038a07" />
        </Ico>
      </Slot>
      <Slot>
        <Ico w={30}>
          <circle cx="16" cy="15" r="14" fill="#85b956" />
          <path d="M15 6h3v5h-3z" fill="#555" />
          <circle cx="16.500" cy="14" r="4.500" fill="#566" /><circle cx="16.500" cy="14" r="1.800" fill="#ddd" />
          <path d="M14 17 6 31M19 17l8 14" stroke="#eceff0" strokeWidth="3" />
          <path d="M6 21q11 8 21 0" fill="none" stroke="#eceff0" strokeWidth="2" />
        </Ico>
      </Slot>
      <Slot open>
        <Ico>
          <path d="M5 3h16l6 6v20H5z" fill="#fdfdfb" stroke="#c9c4bb" /><path d="M21 3v6h6z" fill="#d9d7d2" stroke="#bbb" strokeWidth=".7" />
        </Ico>
      </Slot>
      <Slot>
        <Ico>
          <ellipse cx="12" cy="12" rx="11" ry="7" fill="#d93434" transform="rotate(-20 12 12)" />
          <ellipse cx="12" cy="8" rx="10.500" ry="6" fill="#f7ecec" stroke="#d13f3f" strokeWidth="1.500" transform="rotate(-15 12 8)" />
          <path d="M6 9l19 11M15 6l4 17" stroke="#8f9aa5" strokeWidth="3.200" />
          <path d="M6 9l19 11M15 6l4 17" stroke="#e6ecf1" strokeWidth="1.800" />
          <ellipse cx="17.500" cy="26" rx="3" ry="4.500" fill="none" stroke="#2b88cf" strokeWidth="2.600" transform="rotate(15 17.500 26)" />
          <ellipse cx="26.500" cy="22" rx="4.500" ry="3" fill="none" stroke="#2b88cf" strokeWidth="2.600" transform="rotate(40 26.500 22)" />
        </Ico>
      </Slot>
      <Slot>
        <Ico>
          <path d="M14 1A15.500 15.500 0 0 0 14 31 18 18 0 0 1 14 1z" fill="#f18a1e" />
          <circle cx="18" cy="16" r="14" fill="#2c2255" />
          <path d="M3.500 11.500h28M3 16h29M3.500 20.500h28" stroke="#f2f0fa" strokeWidth="2" />
        </Ico>
      </Slot>
      <Slot>
        <Ico w={30}>
          <rect width="32" height="32" fill="#fff" />
          <text x="16" y="23.500" textAnchor="middle" fontFamily="Liberation Sans, sans-serif" fontWeight="700" fontSize="20" textLength="11" lengthAdjust="spacingAndGlyphs" fill="#e20a17" stroke="#e20a17" strokeWidth=".8">N</text>
        </Ico>
      </Slot>
      <Slot>
        <Ico>
          <rect width="32" height="32" rx="2" fill="#303f8f" />
          <rect x="7" y="6" width="19" height="19" fill="#1c86c6" stroke="#f2f6fa" strokeWidth="1.500" />
          <path d="m8 18 8.500-8 8.500 8v6H8z" fill="#2fb0e4" /><path d="m8 17 8.500-10 8.500 10-8.500-5z" fill="#0f5593" />
          <rect x="13.500" y="19.500" width="6" height="7" fill="#5ab9e0" stroke="#fff" strokeWidth="1.500" />
        </Ico>
      </Slot>
      <Slot>
        <Ico>
          <rect x="1" y="1" width="30" height="30" rx="6" fill="#1d1d1f" stroke="#8a8a8a" />
          <path d="M2 8q0-6 6-6h16q6 0 6 6v5q-14 3-28 0z" fill="#59595b" opacity=".7" />
          <g fill="#fff">
            <path d="M8.500 10h4.500l-.7 3h-4.500zM15 10h4.500l-.7 3h-4.500zM7 15h4.500l-.7 3h-4.500zM13.800 15h4.500l-.7 3h-4.500zM21 12.500h4.500l-.7 3h-4.500zM20 17.500h4.500l-.7 3h-4.500zM12.700 20h4.500l-.7 3h-4.500z" />
          </g>
        </Ico>
      </Slot>
      <Slot open>
        <Ico>
          <rect width="32" height="32" fill="#3f2870" />
          <Gear x={16} y={16} s={2.500} fill="#d9d9d9" hole="#201537" />
          <circle cx="16" cy="16" r="8.500" fill="#28213a" />
          <g fontFamily="Liberation Sans, sans-serif" fontSize="10" fill="#f6962a" stroke="#241a2c" strokeWidth="1.500" paintOrder="stroke">
            <text x="0.500" y="15" textLength="31" lengthAdjust="spacingAndGlyphs">Java EE</text>
            <text x="9.500" y="23.500" textLength="14" lengthAdjust="spacingAndGlyphs">IDE</text>
          </g>
        </Ico>
      </Slot>
      <Slot open>
        <Ico>
          <path d="M17 6h13v20H17z" fill="#fff" stroke="#d9502c" />
          <circle cx="23" cy="12.500" r="4" fill="#d9502c" /><path d="M23 12.500V8a4.500 4.500 0 0 1 4.500 4.500z" fill="#fff" />
          <path d="M19 19h9M19 22.500h9" stroke="#d9502c" strokeWidth="1.700" />
          <path d="M2 5 20 1v30L2 27z" fill="#d9502c" />
          <text x="5.500" y="22" fontFamily="Open Sans, sans-serif" fontWeight="700" fontSize="16" fill="#fff">P</text>
        </Ico>
      </Slot>
      <Slot open>
        <Ico>
          <rect width="32" height="31" y="1" fill="#0a70c4" />
          <rect x="5" y="10" width="22" height="14" fill="#fff" /><path d="m5 10.500 11 7.500 11-7.500" fill="none" stroke="#0a70c4" strokeWidth="2" />
        </Ico>
      </Slot>
      <Slot open>
        <Ico>
          <path d="M6 3h22l1 24H4z" fill="#f3f8fc" stroke="#4c8cc7" /><path d="M6 2h22v4H6z" fill="#3e85c9" />
          <text x="6" y="19" fontFamily="Liberation Serif, serif" fontWeight="700" fontSize="15" fill="#e8781d">A</text>
          <path d="M18 10h8M18 13h8M18 16h8" stroke="#447fb9" strokeWidth="1.300" /><path d="M7 22h19M7 25h19" stroke="#a9c3db" strokeWidth="1.500" />
        </Ico>
      </Slot>
      <Slot open stacked>
        <Ico>
          <path d="M27 8l5 17-5 4-18 1z" fill="#8e7634" />
          <path d="M10 4h17l2 20-6 6-22-5z" fill="#7bc3c9" stroke="#3f8287" /><path d="M10 4h17v4l-19-1z" fill="#dbecee" />
          <path d="M11 9 4 24l18 4 3-18z" fill="#a9e0e3" opacity=".8" />
          <path d="M11 4v3M14 4v3M17 4v3M20 4v3M23 4v3" stroke="#6e787b" />
        </Ico>
      </Slot>
      <Slot open>
        <Ico>
          <path d="M2 20C2 11 9 5 18 7c8 1 11 6 9 10-2 3-4 2-5 4s2 8-6 9C8 31 2 27 2 20z" fill="#dbe8f3" stroke="#8caec9" />
          <circle cx="7" cy="17" r="2.500" fill="#d8432e" /><circle cx="13" cy="12" r="2.700" fill="#67b044" /><circle cx="20" cy="11" r="2.500" fill="#ebc330" /><circle cx="9" cy="24" r="2.500" fill="#d2663d" /><circle cx="15" cy="20" r="2.700" fill="#3c5874" />
          <path d="m28 7-8 20-3 4 1-5 7-21z" fill="#df862b" /><path d="M24 8q0-5 7-8 2 5-1 10z" fill="#d2ac79" />
        </Ico>
      </Slot>

      <div className="ml-[12px] flex items-center">
        <svg width="30" height="20" viewBox="0 0 30 20" className="mt-px">
          <rect x="1" y="1.500" width="28" height="16" fill="none" stroke="#fff" strokeWidth="2" />
          <path d="M4 5.500h22M4 9h22M4 12.500h3m16 0h3" stroke="#fff" strokeWidth="2" strokeDasharray="2 1.300" />
          <path d="M9 13.500h12" stroke="#fff" strokeWidth="2" />
        </svg>
        <svg width="8" height="5" viewBox="0 0 8 5" className="ml-[13px]"><path d="M0 4.500 4 .5l4 4z" fill="#fff" /></svg>
        <div className="ml-[14px] pt-[2px]"><WindowsLogo size={14} /></div>
        <svg width="15" height="16" viewBox="0 0 15 16" className="ml-[10px]" fill="#fff"><path d="M0 1h1.500v14H0zM3 2h5v7H3zM8 4q3 2 7 0l-2 3 1 4q-4 1-6-1z" /></svg>
        <svg width="10" height="16" viewBox="0 0 10 16" className="ml-[14px]" fill="none" stroke="#fff" strokeWidth="1.400"><path d="M1.200 3h6.600v12H1.200z" /><path d="M3 1.500h3" /><path d="M3 7h3v6H3z" fill="#fff" stroke="none" /></svg>
        <svg width="16" height="14" viewBox="0 0 16 14" className="ml-[9px]" fill="#fff"><path d="M0 10h2v2H0zM3 8.500h2V12H3zM6 6.500h2V12H6zM9 4h2v8H9z" /><path d="M12.500 1.500h2v10h-2z" fill="#a78b8b" stroke="#fff" strokeWidth=".8" /></svg>
        <svg width="16" height="16" viewBox="0 0 16 16" className="ml-[8px]"><path d="M0 5h2l4-4v13l-4-4H0z" fill="#fff" /><circle cx="10" cy="10.500" r="4" fill="#fff" stroke="#d51f26" strokeWidth="2" /><path d="m7.500 8 5 5" stroke="#d51f26" strokeWidth="2" /></svg>
      </div>
      <div className="ml-auto mr-[17px] pt-[2px] text-center font-['Noto_Sans',sans-serif] text-[12px] leading-[17px] tracking-[-0.5px] text-white">
        <div>5:06 PM</div>
        <div>9/17/2015</div>
      </div>
    </footer>
  );
}

/* ---------- page ---------- */

function Scrollbar() {
  return (
    <div className="flex w-[17px] shrink-0 flex-col items-center bg-[#f0f0f0]">
      <svg width="17" height="34" viewBox="0 0 17 34" fill="none" stroke="#5c5c5c" strokeWidth="2.600"><path d="m3.500 24 5-5 5 5" /></svg>
      <div className="h-[248px] w-[15px] bg-[#cdcdcd]" />
      <svg width="17" height="34" viewBox="0 0 17 34" className="mt-auto" fill="none" stroke="#5c5c5c" strokeWidth="2.600"><path d="m3.500 10 5 5 5-5" /></svg>
    </div>
  );
}

export default function App() {
  const field = "h-[18px] w-[143px] border border-[#767676] bg-white px-px leading-[18px] text-[#222]";
  return (
    <div className="flex h-[768px] w-[1366px] flex-col overflow-hidden bg-[#555555]">
      <BrowserHeader />
      <div className="flex h-[673px]">
        <main className="w-[1349px] overflow-hidden bg-[#555555]">
          <h1 className="mt-[43px] h-[36px] pl-[12px] text-center font-['DejaVu_Sans',sans-serif] text-[24px] leading-[36px] tracking-[-1.9px] text-white">Weather</h1>
          <div className="mt-[16px] flex h-[20px] items-center font-['Liberation_Sans',sans-serif] text-[13.33px]">
            <div className={field}>kansas city</div>
            <div className={field + " ml-[4px]"}>tampa</div>
            <button className="ml-[3px] flex h-[20px] w-[80px] items-center justify-center whitespace-nowrap border border-[#767676] bg-linear-to-b from-[#ececec] to-[#d2d2d2] pt-[2px] tracking-[-0.05px] text-[#222]">Get Direction</button>
          </div>
          <div className="mt-[18px]"><MapPanel /></div>
          <Directions />
        </main>
        <Scrollbar />
      </div>
      <Taskbar />
    </div>
  );
}
